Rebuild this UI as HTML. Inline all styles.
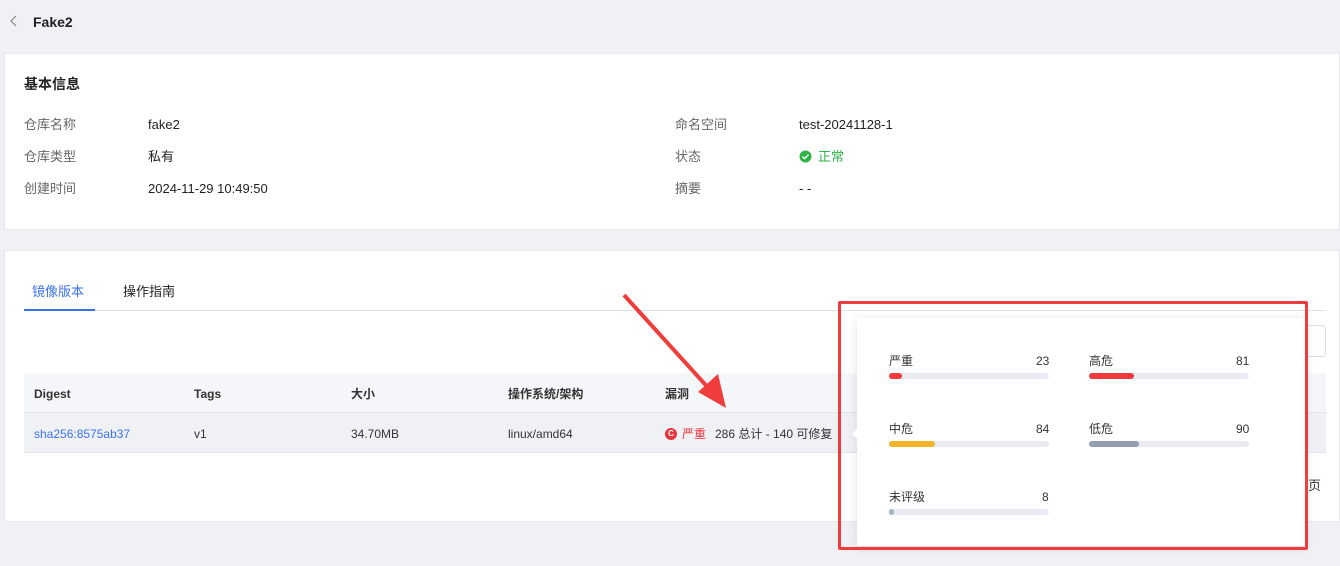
<!DOCTYPE html>
<html><head><meta charset="utf-8"><style>
*{box-sizing:border-box;margin:0;padding:0}
body{width:1340px;height:566px;background:#f0f1f5;font-family:"Liberation Sans","Noto Sans CJK SC",sans-serif;font-size:13px;color:#333;position:relative;overflow:hidden;line-height:18px}
.a{position:absolute;white-space:nowrap;line-height:18px}
.card{position:absolute;background:#fff;left:4px;right:0;border:1px solid #e6e8ee}
.lb{color:#666;font-size:13px}
.v{color:#222;font-size:13px}
.bar{position:absolute;height:6px;width:160px;background:#e9ebf1;border-radius:3px}
.bar i{display:block;height:6px;border-radius:3px}
</style></head><body>
<svg class="a" style="left:9px;top:15px" width="10" height="12" viewBox="0 0 10 12"><path d="M7 1L2 6l5 5" fill="none" stroke="#888" stroke-width="1.2"/></svg>
<div class="a" style="left:33px;top:13px;font-weight:bold;font-size:14px;color:#222">Fake2</div>
<div class="card" style="top:53px;height:177px"></div>
<div class="a" style="left:24px;top:75px;font-weight:bold;font-size:14px;color:#222">基本信息</div>
<div class="a lb" style="left:24px;top:116px">仓库名称</div><div class="a v" style="left:148px;top:116px">fake2</div>
<div class="a lb" style="left:24px;top:148px">仓库类型</div><div class="a v" style="left:148px;top:148px">私有</div>
<div class="a lb" style="left:24px;top:180px">创建时间</div><div class="a v" style="left:148px;top:180px">2024-11-29 10:49:50</div>
<div class="a lb" style="left:675px;top:116px">命名空间</div><div class="a v" style="left:799px;top:116px">test-20241128-1</div>
<div class="a lb" style="left:675px;top:148px">状态</div>
<svg class="a" style="left:799px;top:150px" width="13" height="13" viewBox="0 0 13 13"><circle cx="6.5" cy="6.5" r="6" fill="#2fb344"/><path d="M3.5 6.6l2 2 4-4" fill="none" stroke="#fff" stroke-width="1.5"/></svg>
<div class="a" style="left:818px;top:148px;color:#2fb344">正常</div>
<div class="a lb" style="left:675px;top:180px">摘要</div><div class="a v" style="left:799px;top:180px">- -</div>

<div class="card" style="top:250px;height:272px"></div>
<div class="a" style="left:32px;top:283px;color:#3a72f0">镜像版本</div>
<div class="a" style="left:123px;top:283px;color:#222">操作指南</div>
<div class="a" style="left:24px;top:310px;width:1302px;height:1px;background:#dfe1e6"></div>
<div class="a" style="left:24px;top:309px;width:71px;height:2px;background:#3a72f0"></div>
<div class="a" style="left:1090px;top:325px;width:236px;height:32px;border:1px solid #dcdfe6;border-radius:3px"></div>
<div class="a" style="left:24px;top:373px;width:1302px;height:40px;background:#f5f6f9;border-bottom:1px solid #e3e5ea"></div>
<div class="a" style="left:24px;top:413px;width:1302px;height:40px;background:#f0f1f5;border-bottom:1px solid #e3e5ea"></div>
<div class="a" style="left:34px;top:385px;font-size:12px;font-weight:bold;color:#333">Digest</div>
<div class="a" style="left:194px;top:385px;font-size:12px;font-weight:bold;color:#333">Tags</div>
<div class="a" style="left:351px;top:385px;font-size:12px;font-weight:bold;color:#333">大小</div>
<div class="a" style="left:508px;top:385px;font-size:12px;font-weight:bold;color:#333">操作系统/架构</div>
<div class="a" style="left:665px;top:385px;font-size:12px;font-weight:bold;color:#333">漏洞</div>
<div class="a" style="left:34px;top:425px;font-size:12px;color:#3a72f0">sha256:8575ab37</div>
<div class="a" style="left:194px;top:425px;font-size:12px">v1</div>
<div class="a" style="left:351px;top:425px;font-size:12px">34.70MB</div>
<div class="a" style="left:508px;top:425px;font-size:12px">linux/amd64</div>
<div class="a" style="left:665px;top:428px;width:12px;height:12px;border-radius:6px;background:#e8343a;color:#fff;font-size:8px;text-align:center;line-height:12px;font-weight:bold">C</div>
<div class="a" style="left:682px;top:425px;font-size:12px;color:#e8343a">严重</div>
<div class="a" style="left:715px;top:425px;font-size:12px;color:#333">286 总计 - 140 可修复</div>
<div class="a" style="left:1308px;top:477px;font-size:13px">页</div>

<div class="a" style="left:857px;top:318px;width:448px;height:228px;background:#fff;box-shadow:0 2px 10px rgba(0,0,0,.12)"></div>
<div class="a" style="left:852px;top:428px;width:0;height:0;border:6px solid transparent;border-right-color:#fff;border-left:0"></div>
<div class="a" style="left:889px;top:352px;font-size:12px">严重</div><div class="a" style="left:1036px;top:352px;font-size:12px">23</div>
<div class="bar" style="left:889px;top:373px"><i style="width:13px;background:#f03a3e"></i></div>
<div class="a" style="left:1089px;top:352px;font-size:12px">高危</div><div class="a" style="left:1236px;top:352px;font-size:12px">81</div>
<div class="bar" style="left:1089px;top:373px"><i style="width:45px;background:#f03a3e"></i></div>
<div class="a" style="left:889px;top:420px;font-size:12px">中危</div><div class="a" style="left:1036px;top:420px;font-size:12px">84</div>
<div class="bar" style="left:889px;top:441px"><i style="width:46px;background:#f2b52a"></i></div>
<div class="a" style="left:1089px;top:420px;font-size:12px">低危</div><div class="a" style="left:1236px;top:420px;font-size:12px">90</div>
<div class="bar" style="left:1089px;top:441px"><i style="width:50px;background:#939eb0"></i></div>
<div class="a" style="left:889px;top:488px;font-size:12px">未评级</div><div class="a" style="left:1042px;top:488px;font-size:12px">8</div>
<div class="bar" style="left:889px;top:509px"><i style="width:5px;background:#aab2c2"></i></div>

<div class="a" style="left:838px;top:301px;width:470px;height:249px;border:3px solid #f03c3c;border-radius:2px"></div>
<svg class="a" style="left:0;top:0" width="1340" height="566"><line x1="624" y1="295" x2="712" y2="392" stroke="#f03c3c" stroke-width="4"/><polygon points="726,408 698,392 718,374" fill="#f03c3c"/></svg>
</body></html>
